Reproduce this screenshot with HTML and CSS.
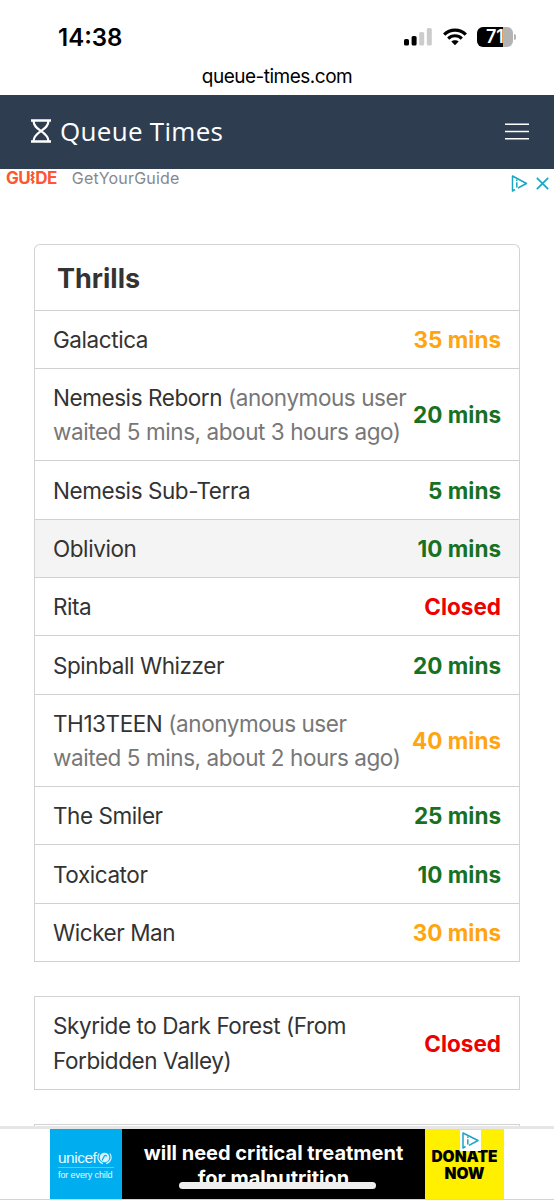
FILE: index.html
```html
<!DOCTYPE html>
<html lang="en">
<head>
  <meta charset="UTF-8" />
  <meta name="viewport" content="width=device-width, initial-scale=1.0"/>
  <title>Queue Times</title>
  <link rel="stylesheet" href="styles.css">
</head>
<body>

<!-- Phone status bar -->
<div class="status-bar">
  <span class="clock">14:38</span>
  <div class="status-icons">
    <svg class="signal" width="28" height="18" viewBox="0 0 28 18">
      <rect x="0" y="11" width="5" height="6.5" rx="1.6" fill="#000"/>
      <rect x="7.6" y="8" width="5" height="9.5" rx="1.6" fill="#000"/>
      <rect x="15.2" y="4" width="5" height="13.5" rx="1.6" fill="#ccc"/>
      <rect x="22.8" y="0" width="5" height="17.5" rx="1.6" fill="#ccc"/>
    </svg>
    <svg class="wifi" width="24" height="18" viewBox="0 0 24 18">
      <path d="M1.2 6.6C7 .5 17 .5 22.8 6.6" fill="none" stroke="#000" stroke-width="3.2"/>
      <path d="M5.2 10.6C9 6.8 15 6.8 18.8 10.6" fill="none" stroke="#000" stroke-width="3"/>
      <path d="M12 17.3L8.3 13.6C10.3 11.8 13.7 11.8 15.7 13.6Z" fill="#000"/>
    </svg>
    <div class="battery"><span>71</span></div>
    <div class="battery-tip"></div>
  </div>
</div>
<div class="address">queue-times.com</div>

<nav class="navbar">
  <a class="brand">
    <svg width="20" height="24" viewBox="0 0 20 24" fill="none" stroke="#fff" stroke-width="2.2">
      <path d="M0 1.5H20M0 22.5H20" stroke-width="2.4"/>
      <path d="M2.6 2C2.6 7.5 6.5 9.5 10 12C13.5 14.5 17.4 17 17.4 22M17.4 2C17.4 7.5 13.5 9.5 10 12C6.5 14.5 2.6 17 2.6 22"/>
    </svg>
    <span>Queue Times</span>
  </a>
  <svg class="menu" width="24" height="18" viewBox="0 0 24 18" stroke="#fff" stroke-width="1.5">
    <path d="M0 2.3H24M0 9.5H24M0 16.7H24"/>
  </svg>
</nav>

<!-- Top ad -->
<div class="top-ad">
  <div class="ad-advertiser">
    <div class="ad-logo"><span>YOUR</span><span class="ad-guide">GU<svg width="5" height="13" viewBox="0 0 5 13" fill="none" stroke="#ff5533" stroke-width="2"><path d="M1.5 .5L3.5 2.5L1.5 4.500L3.500 6.500L1.500 8.500L3.500 10.500L2 12.500"/></svg>DE</span></div>
    <span class="ad-name">GetYourGuide</span>
  </div>
  <div class="ad-controls">
    <svg width="17" height="17" viewBox="0 0 17 17" fill="none" stroke="#1aa6c4" stroke-width="1.5" stroke-linejoin="round">
      <path d="M4 14.5L1.5 16V1L15.5 8.5L7 13"/>
      <path d="M5.800 7.300V12.500M5.800 4.500V6"/>
    </svg>
    <svg width="13" height="13" viewBox="0 0 13 13" fill="none" stroke="#1aa6c4" stroke-width="1.7">
      <path d="M.8.8L12.2 12.2M12.2.8L.8 12.2"/>
    </svg>
  </div>
</div>

<main class="rides">
  <section class="panel rounded">
    <h2>Thrills</h2>
    <a class="ride"><span class="name">Galactica</span><span class="wait medium">35 mins</span></a>
    <a class="ride"><span class="name">Nemesis Reborn <small>(anonymous user<br>waited 5 mins, about 3 hours ago)</small></span><span class="wait short">20 mins</span></a>
    <a class="ride"><span class="name">Nemesis Sub-Terra</span><span class="wait short">5 mins</span></a>
    <a class="ride active"><span class="name">Oblivion</span><span class="wait short">10 mins</span></a>
    <a class="ride"><span class="name">Rita</span><span class="wait closed">Closed</span></a>
    <a class="ride"><span class="name">Spinball Whizzer</span><span class="wait short">20 mins</span></a>
    <a class="ride"><span class="name">TH13TEEN <small>(anonymous user<br>waited 5 mins, about 2 hours ago)</small></span><span class="wait medium">40 mins</span></a>
    <a class="ride"><span class="name">The Smiler</span><span class="wait short">25 mins</span></a>
    <a class="ride"><span class="name">Toxicator</span><span class="wait short">10 mins</span></a>
    <a class="ride"><span class="name">Wicker Man</span><span class="wait medium">30 mins</span></a>
  </section>

  <section class="panel">
    <a class="ride"><span class="name">Skyride to Dark Forest (From<br>Forbidden Valley)</span><span class="wait closed">Closed</span></a>
  </section>

  <section class="panel next"></section>
</main>

<!-- Sticky bottom ad -->
<div class="bottom-ad">
  <div class="banner">
    <div class="unicef">
      <div class="unicef-name">
        <span>unicef</span>
        <svg width="15" height="14" viewBox="0 0 15 14">
          <circle cx="7.5" cy="6.5" r="4.8" fill="#d8f2fd"/>
          <path d="M5.5 9.5C5 7.5 7 7.5 7 5.5C7.5 3.8 9.5 4 9.5 5.5" fill="none" stroke="#00aeef" stroke-width="1.2"/>
          <path d="M2.2 2.5C-.3 6 .8 11 6 12.8M12.8 2.5C15.3 6 14.2 11 9 12.8" fill="none" stroke="#d8f2fd" stroke-width="1.2"/>
        </svg>
      </div>
      <div class="unicef-tag">for every child</div>
    </div>
    <div class="message">will need critical treatment<br>for malnutrition</div>
    <div class="donate">DONATE<br>NOW
      <svg class="ad-choices" width="21" height="21" viewBox="0 0 21 21" fill="none" stroke="#1aa6c4" stroke-width="1.5" stroke-linejoin="round">
        <path d="M0 0H21V21H0Z" fill="#fff" stroke="none"/>
        <path d="M5.5 16.5L3 18V3L18 10.5L9 15.3"/>
        <path d="M7.800 9.300V14.500M7.800 6.500V8"/>
      </svg>
    </div>
  </div>
  <div class="home-indicator"></div>
</div>

</body>
</html>
```

FILE: styles.css
```css
* {
  box-sizing: border-box;
}

body {
  margin: 0;
  height: 1200px;
  overflow: hidden;
  font-family: Inter, sans-serif;
  background: #fff;
  color: #333;
}

.status-bar {
  display: flex;
  justify-content: space-between;
  height: 60px;
  padding: 24px 38px 0 58px;
  color: #000;
}

.clock {
  font-size: 24px;
  line-height: 27px;
  font-weight: 600;
}

.status-icons {
  display: flex;
  align-items: center;
  height: 26px;
}

.signal {
  margin-right: 1px;
}

.wifi {
  margin-left: 10px;
}

.battery {
  width: 36px;
  height: 20px;
  margin-left: 10px;
  border-radius: 6px;
  background: linear-gradient(to right, #000 71%, #b3b3b3 71%);
  color: #fff;
  font-size: 18px;
  font-weight: 600;
  line-height: 20px;
  text-align: center;
}

.battery-tip {
  width: 2px;
  height: 6px;
  margin-left: 1px;
  border-radius: 0 2px 2px 0;
  background: #b3b3b3;
}

.address {
  height: 35px;
  color: #000;
  font-size: 19px;
  line-height: 33px;
  letter-spacing: -0.5px;
  text-align: center;
}

.navbar {
  display: flex;
  align-items: center;
  justify-content: space-between;
  height: 74px;
  padding: 0 25px 2px 31px;
  background: #2e3e50;
}

.brand {
  display: flex;
  align-items: center;
  gap: 9px;
  color: #fff;
  font-family: "Open Sans", sans-serif;
  font-size: 26px;
  letter-spacing: 0.3px;
}

.top-ad {
  display: flex;
  justify-content: space-between;
  height: 75px;
  padding: 0 5px 0 6px;
}

.ad-advertiser {
  display: flex;
  align-items: flex-end;
  gap: 15px;
  height: 18px;
  overflow: hidden;
}

.ad-logo {
  display: flex;
  flex-direction: column;
  color: #ff5533;
  font-size: 17px;
  font-weight: 700;
  line-height: 15px;
  letter-spacing: -0.5px;
}

.ad-guide {
  line-height: 17px;
}

.ad-name {
  color: #85888d;
  font-size: 16px;
  line-height: 18px;
  letter-spacing: 0.2px;
}

.ad-controls {
  display: flex;
  align-items: center;
  gap: 8px;
  height: 29px;
}

.rides {
  display: flex;
  flex-direction: column;
  gap: 34.4px;
  padding: 0 34px;
}

.panel {
  border: 1.5px solid #d3d3d3;
  border-bottom: none;
}

.rounded {
  border-radius: 6px 6px 0 0;
}

h2 {
  height: 65.8px;
  margin: 0;
  padding-left: 22px;
  border-bottom: 1px solid #d1d1d1;
  font-size: 27px;
  font-weight: 700;
  line-height: 68px;
}

.ride {
  display: flex;
  align-items: center;
  justify-content: space-between;
  padding: 12.3px 18px 10.9px;
  border-bottom: 1px solid #d1d1d1;
  font-size: 22.5px;
  line-height: 34.1px;
  white-space: nowrap;
}

.name {
  letter-spacing: -0.43px;
}

.ride small {
  color: #777;
  font-size: inherit;
}

.active {
  background: #f4f4f4;
}

.wait {
  font-weight: 700;
}

.short {
  color: #17711f;
}

.medium {
  color: #ffa510;
}

.closed {
  color: #ec0000;
}

.next {
  height: 80px;
}

.bottom-ad {
  position: fixed;
  left: 0;
  right: 0;
  bottom: 0;
  height: 74px;
  border-top: 3px solid #e6e6e6;
  border-bottom: 1px solid #d4d4d4;
  background: #fff;
}

.banner {
  display: flex;
  width: 454px;
  height: 70px;
  margin-left: 50px;
  overflow: hidden;
}

.unicef {
  width: 72px;
  padding: 19px 8px 0;
  background: #00aeef;
  color: #e8f8ff;
  font-family: "Liberation Sans", sans-serif;
}

.unicef-name {
  display: flex;
  align-items: center;
  gap: 1px;
  height: 20px;
  border-bottom: 1px solid #55caf5;
  font-size: 15.5px;
  letter-spacing: -0.5px;
}

.unicef-tag {
  font-size: 9px;
  line-height: 14px;
  letter-spacing: -0.1px;
  white-space: nowrap;
}

.message {
  width: 303px;
  padding-top: 12px;
  background: #000;
  color: #fff;
  font-size: 20px;
  font-weight: 700;
  line-height: 25px;
  text-align: center;
  white-space: nowrap;
}

.donate {
  position: relative;
  width: 79px;
  padding-top: 19px;
  background: #fff000;
  color: #000;
  font-size: 15.5px;
  font-weight: 900;
  line-height: 17px;
  text-align: center;
}

.ad-choices {
  position: absolute;
  top: 1px;
  left: 35px;
}

.home-indicator {
  position: absolute;
  left: 179px;
  top: 53px;
  width: 197px;
  height: 7px;
  border-radius: 4px;
  background: #efefef;
}
```
